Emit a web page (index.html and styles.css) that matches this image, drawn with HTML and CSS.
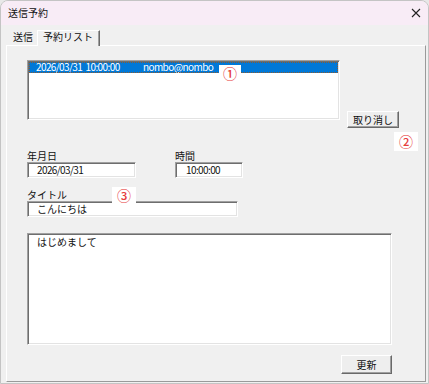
FILE: index.html
```
<!DOCTYPE html>
<html>
	<head>
		<meta name="viewport" content="width=device-width, initial-scale=1" />
		<link rel="stylesheet" href="styles.css">
	</head>

	<body>
		<div class="window">
			<div class="titlebar">
				<span class="title">送信予約</span>
				<svg class="close" width="10" height="10" viewBox="0 0 10 10"><path d="M1 1 L9 9 M9 1 L1 9" stroke="#222" stroke-width="1.1" fill="none" /></svg>
			</div>
			<div class="tabs">
				<div class="tab">送信</div>
				<div class="tab active">予約リスト</div>
			</div>
			<div class="panel">
				<div class="list-row">
					<div class="listbox">
						<div class="item selected"><span class="when num">2026/03/31&nbsp; 10:00:00</span><span class="num">nombo@nombo</span></div>
					</div>
					<button class="btn cancel">取り消し</button>
				</div>

				<div class="fields">
					<div class="field">
						<label>年月日</label>
						<div class="input date num">2026/03/31</div>
					</div>
					<div class="field">
						<label>時間</label>
						<div class="input time num">10:00:00</div>
					</div>
				</div>

				<label class="title-label">タイトル</label>
				<div class="input subject">こんにちは</div>

				<div class="input body-text">はじめまして</div>

				<div class="actions">
					<button class="btn update">更新</button>
				</div>
			</div>

			<!-- 注釈マーク -->
			<span class="mark m1">①</span>
			<span class="mark m2">②</span>
			<span class="mark m3">③</span>
		</div>
	</body>
</html>
```

FILE: styles.css
```
body {
	margin: 0;
	font-family: "Noto Sans CJK JP", "Noto Sans", sans-serif;
	font-size: 10px;
	color: #111;
	background: #e8e8e8;
}

.window {
	position: relative;
	width: 429px;
	height: 384px;
	box-sizing: border-box;
	border: 1px solid #c4c4c4;
	border-radius: 8px 8px 0 0;
	background-color: #f0f0f0;
	overflow: hidden;
	display: flex;
	flex-direction: column;
}

.titlebar {
	height: 24px;
	flex: none;
	background-color: #f8ecf6;
	display: flex;
	align-items: center;
	justify-content: space-between;
	padding: 0 6px 0 7px;
	line-height: 12px;
}

.close { margin-top: -1px; margin-right: 1px; }

.tabs {
	height: 20px;
	flex: none;
	display: flex;
	align-items: flex-end;
	padding-left: 7px;
}

.tab {
	height: 14px;
	line-height: 12px;
	padding: 0 4px 0 5px;
}

.tab.active {
	height: 15px;
	padding: 0 6px 0 5px;
	border-top: 1px solid #fff;
	border-left: 1px solid #fff;
	border-right: 1px solid #6a6a6a;
	box-shadow: inset -1px 0 #a0a0a0;
	margin-bottom: -1px;
	background-color: #f0f0f0;
	position: relative;
}

.panel {
	flex: 1;
	margin: 0 2px 1px 5px;
	border-top: 1px solid #fff;
	border-left: 1px solid #fff;
	border-right: 1px solid #9a9a9a;
	border-bottom: 1px solid #9a9a9a;
	padding: 14px 0 0 20px;
	display: flex;
	flex-direction: column;
	align-items: flex-start;
}

.num { letter-spacing: -0.6px; }

.list-row {
	display: flex;
	align-items: flex-end;
	gap: 7px;
}

.listbox,
.input {
	box-sizing: border-box;
	background-color: #fff;
	border: 1px solid;
	border-color: #a0a0a0 #fff #fff #a0a0a0;
	box-shadow: inset 1px 1px #6e6e6e, inset -1px -1px #e3e3e3;
}

.listbox {
	width: 313px;
	height: 60px;
	padding: 1px;
}

.item {
	height: 11px;
	line-height: 10px;
	padding-left: 7px;
	display: flex;
	white-space: nowrap;
}

.item.selected {
	background-color: #0078d7;
	color: #fff;
	outline: 1px dotted #8a5a30;
	outline-offset: -1px;
}

.when { width: 107px; }

.btn {
	box-sizing: border-box;
	font-family: inherit;
	font-size: 10px;
	color: #111;
	background-color: #eeeeee;
	border: 1px solid;
	border-color: #fff #696969 #696969 #fff;
	box-shadow: inset -1px -1px #a0a0a0;
	padding: 0;
	line-height: 12px;
}

.cancel {
	width: 52px;
	height: 17px;
	margin-bottom: -8px;
}

.fields {
	display: flex;
	gap: 39px;
	margin-top: 30px;
}

.field {
	display: flex;
	flex-direction: column;
}

label {
	line-height: 12px;
	height: 12px;
}

.input {
	height: 16px;
	line-height: 14px;
	padding-left: 9px;
	white-space: nowrap;
}

.date { width: 109px; }
.time { width: 68px; padding-left: 10px; }

.title-label { margin-top: 11px; }

.subject {
	width: 211px;
}

.body-text {
	width: 365px;
	height: 112px;
	margin-top: 16px;
	padding-top: 3px;
	line-height: 10px;
}

.actions {
	width: 365px;
	display: flex;
	justify-content: flex-end;
	margin-top: 10px;
}

.update {
	width: 51px;
	height: 19px;
}

.mark {
	position: absolute;
	background-color: #fff;
	color: #e63c3c;
	font-size: 14px;
	font-weight: 500;
	line-height: 16px;
	text-align: center;
}

.m1 { left: 218px; top: 64px; width: 22px; height: 16px; }
.m2 { left: 393px; top: 131px; width: 24px; height: 19px; line-height: 19px; }
.m3 { left: 111px; top: 186px; width: 24px; height: 16px; }
```
